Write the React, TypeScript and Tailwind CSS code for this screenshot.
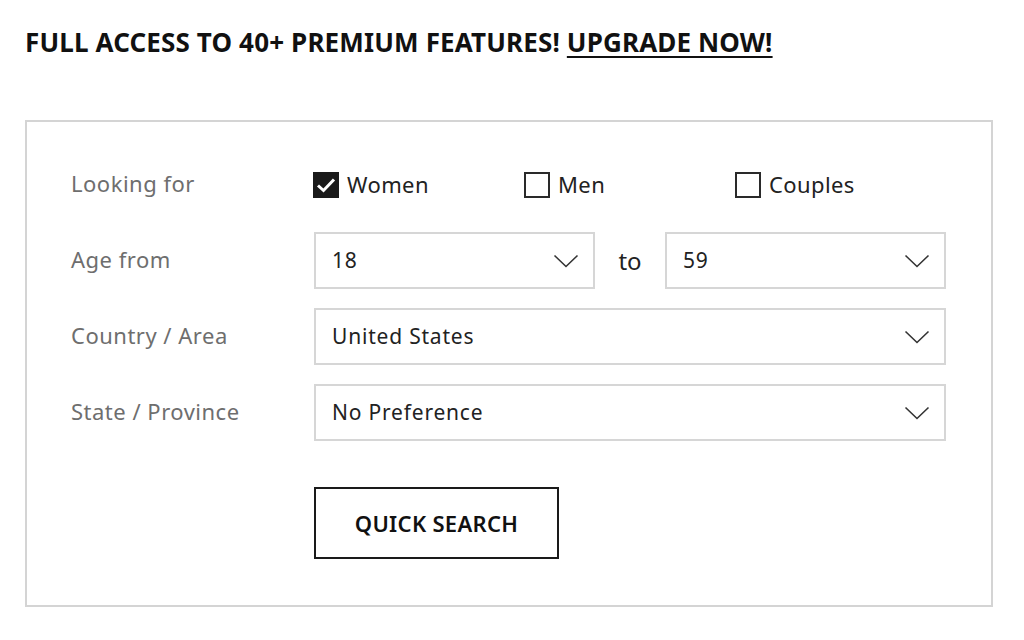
import React from "react";

const Chevron: React.FC = () => (
  <svg width="26" height="14" viewBox="0 0 26 14" fill="none" className="shrink-0">
    <path d="M1.5 1.5 L13 12.5 L24.5 1.5" stroke="#333" strokeWidth="1.6" strokeLinejoin="miter" />
  </svg>
);

const Check: React.FC<{ label: string; checked?: boolean }> = ({ label, checked }) => (
  <label className="flex items-center gap-[8px] w-[211px]">
    <span
      className={
        checked
          ? "w-[26px] h-[26px] bg-[#1a1a1a] flex items-center justify-center"
          : "w-[26px] h-[26px] border-2 border-[#2a2a2a] bg-white"
      }
    >
      {checked && (
        <svg width="20" height="16" viewBox="0 0 20 16" fill="none">
          <path d="M2 8.5 L7.5 13.5 L18 2.5" stroke="#fff" strokeWidth="3" />
        </svg>
      )}
    </span>
    <span className="text-[22px] tracking-[0.4px] text-[#222]">{label}</span>
  </label>
);

const Select: React.FC<{ value: string; className?: string }> = ({ value, className }) => (
  <div
    className={
      "h-[57px] border-2 border-[#d6d6d6] bg-white flex items-center justify-between pl-[16px] pr-[14px] " +
      (className ?? "")
    }
  >
    <span className="text-[21px] tracking-[0.8px] text-[#222]">{value}</span>
    <Chevron />
  </div>
);

const Row: React.FC<{ label: string; children: React.ReactNode }> = ({ label, children }) => (
  <div className="flex items-center h-[57px]">
    <div className="w-[243px] text-[22px] tracking-[0.5px] text-[#6e6e6e] -mt-[2px]">{label}</div>
    <div className="flex-1 flex items-center">{children}</div>
  </div>
);

export default function App() {
  return (
    <div
      className="w-[1024px] h-[640px] bg-white pl-[25px] pt-[25px]"
      style={{ fontFamily: '"Noto Sans", "Open Sans", sans-serif' }}
    >
      <h1 className="text-[26px] font-bold text-[#111] leading-[34px] tracking-[0.15px]">
        FULL ACCESS TO 40+ PREMIUM FEATURES!{" "}
        <span className="underline underline-offset-[4px] decoration-2">UPGRADE NOW!</span>
      </h1>

      <div className="mt-[61px] w-[968px] h-[487px] border-2 border-[#d4d4d4] pl-[44px] pr-[45px] pt-[34px]">
        <div className="flex flex-col gap-[19px]">
          <Row label="Looking for">
            <Check label="Women" checked />
            <Check label="Men" />
            <Check label="Couples" />
          </Row>
          <Row label="Age from">
            <Select value="18" className="w-[281px]" />
            <span className="w-[70px] text-center text-[24px] text-[#222]">to</span>
            <Select value="59" className="w-[281px]" />
          </Row>
          <Row label="Country / Area">
            <Select value="United States" className="w-[632px]" />
          </Row>
          <Row label="State / Province">
            <Select value="No Preference" className="w-[632px]" />
          </Row>
        </div>
        <div className="pl-[243px] mt-[46px]">
          <button className="w-[245px] h-[72px] border-2 border-[#1a1a1a] bg-white text-[22px] font-semibold text-[#111] tracking-[0.3px]">
            QUICK SEARCH
          </button>
        </div>
      </div>
    </div>
  );
}
